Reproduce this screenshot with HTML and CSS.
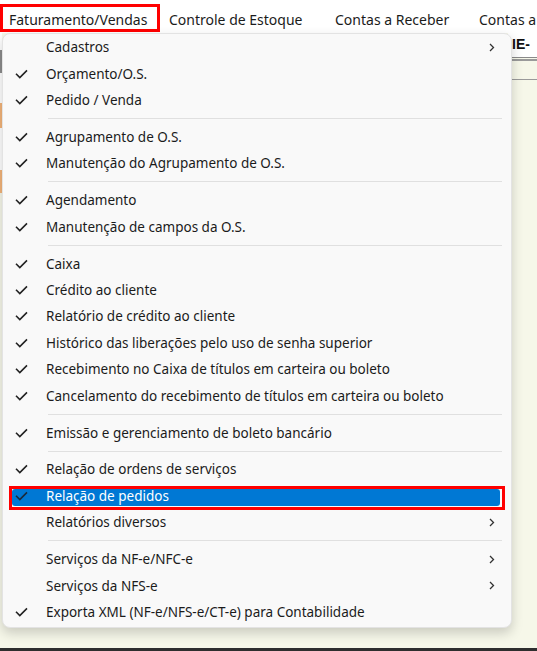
FILE: index.html
```html
<!DOCTYPE html>
<html lang="pt-BR">
<head>
<meta charset="utf-8">
<title>Menu</title>
<link rel="stylesheet" href="styles.css">
</head>
<body>
<div class="menubar">
  <div class="mb-item mb-active"><span>Faturamento/Vendas</span></div>
  <div class="mb-item"><span>Controle de Estoque</span></div>
  <div class="mb-item"><span>Contas a Receber</span></div>
  <div class="mb-item"><span>Contas a</span></div>
</div>
<div class="workspace">
  <div class="leftstrip">
    <div class="seg seg-white" style="height:17px"></div>
    <div class="seg seg-gray" style="height:23px"></div>
    <div class="seg seg-white" style="height:30px"></div>
    <div class="seg seg-orange" style="height:25px"></div>
    <div class="seg seg-white" style="height:42px"></div>
    <div class="seg seg-orange" style="height:23px"></div>
  </div>
  <div class="backpanel">
    <div class="bp-head">IE-</div>
    <div class="bp-rule"></div>
    <div class="bp-gap"></div>
    <div class="bp-line"></div>
  </div>
  <div class="bottomline"></div>

  <div class="popup">
    <div class="item"><span class="chk"></span><span class="lbl">Cadastros</span><span class="arr"><svg width="6" height="9" viewBox="0 0 6 9"><path d="M1 1l3.5 3.5L1 8" fill="none" stroke="#333" stroke-width="1.3"/></svg></span></div>
    <div class="item"><span class="chk"><svg width="13" height="10" viewBox="0 0 13 10"><path d="M1 4.8l3.8 3.8L12 1.4" fill="none" stroke="#222" stroke-width="1.6"/></svg></span><span class="lbl">Orçamento/O.S.</span></div>
    <div class="item"><span class="chk"><svg width="13" height="10" viewBox="0 0 13 10"><path d="M1 4.8l3.8 3.8L12 1.4" fill="none" stroke="#222" stroke-width="1.6"/></svg></span><span class="lbl">Pedido / Venda</span></div>
    <div class="sep"></div>
    <div class="item"><span class="chk"><svg width="13" height="10" viewBox="0 0 13 10"><path d="M1 4.8l3.8 3.8L12 1.4" fill="none" stroke="#222" stroke-width="1.6"/></svg></span><span class="lbl">Agrupamento de O.S.</span></div>
    <div class="item"><span class="chk"><svg width="13" height="10" viewBox="0 0 13 10"><path d="M1 4.8l3.8 3.8L12 1.4" fill="none" stroke="#222" stroke-width="1.6"/></svg></span><span class="lbl">Manutenção do Agrupamento de O.S.</span></div>
    <div class="sep"></div>
    <div class="item"><span class="chk"><svg width="13" height="10" viewBox="0 0 13 10"><path d="M1 4.8l3.8 3.8L12 1.4" fill="none" stroke="#222" stroke-width="1.6"/></svg></span><span class="lbl">Agendamento</span></div>
    <div class="item"><span class="chk"><svg width="13" height="10" viewBox="0 0 13 10"><path d="M1 4.8l3.8 3.8L12 1.4" fill="none" stroke="#222" stroke-width="1.6"/></svg></span><span class="lbl">Manutenção de campos da O.S.</span></div>
    <div class="sep"></div>
    <div class="item"><span class="chk"><svg width="13" height="10" viewBox="0 0 13 10"><path d="M1 4.8l3.8 3.8L12 1.4" fill="none" stroke="#222" stroke-width="1.6"/></svg></span><span class="lbl">Caixa</span></div>
    <div class="item"><span class="chk"><svg width="13" height="10" viewBox="0 0 13 10"><path d="M1 4.8l3.8 3.8L12 1.4" fill="none" stroke="#222" stroke-width="1.6"/></svg></span><span class="lbl">Crédito ao cliente</span></div>
    <div class="item"><span class="chk"><svg width="13" height="10" viewBox="0 0 13 10"><path d="M1 4.8l3.8 3.8L12 1.4" fill="none" stroke="#222" stroke-width="1.6"/></svg></span><span class="lbl">Relatório de crédito ao cliente</span></div>
    <div class="item"><span class="chk"><svg width="13" height="10" viewBox="0 0 13 10"><path d="M1 4.8l3.8 3.8L12 1.4" fill="none" stroke="#222" stroke-width="1.6"/></svg></span><span class="lbl">Histórico das liberações pelo uso de senha superior</span></div>
    <div class="item"><span class="chk"><svg width="13" height="10" viewBox="0 0 13 10"><path d="M1 4.8l3.8 3.8L12 1.4" fill="none" stroke="#222" stroke-width="1.6"/></svg></span><span class="lbl">Recebimento no Caixa de títulos em carteira ou boleto</span></div>
    <div class="item"><span class="chk"><svg width="13" height="10" viewBox="0 0 13 10"><path d="M1 4.8l3.8 3.8L12 1.4" fill="none" stroke="#222" stroke-width="1.6"/></svg></span><span class="lbl">Cancelamento do recebimento de títulos em carteira ou boleto</span></div>
    <div class="sep"></div>
    <div class="item"><span class="chk"><svg width="13" height="10" viewBox="0 0 13 10"><path d="M1 4.8l3.8 3.8L12 1.4" fill="none" stroke="#222" stroke-width="1.6"/></svg></span><span class="lbl">Emissão e gerenciamento de boleto bancário</span></div>
    <div class="sep"></div>
    <div class="item"><span class="chk"><svg width="13" height="10" viewBox="0 0 13 10"><path d="M1 4.8l3.8 3.8L12 1.4" fill="none" stroke="#222" stroke-width="1.6"/></svg></span><span class="lbl">Relação de ordens de serviços</span></div>
    <div class="item item-sel"><span class="chk"><svg width="13" height="10" viewBox="0 0 13 10"><path d="M1 4.8l3.8 3.8L12 1.4" fill="none" stroke="#1b2a3a" stroke-width="1.6"/></svg></span><span class="lbl">Relação de pedidos</span></div>
    <div class="item"><span class="chk"></span><span class="lbl">Relatórios diversos</span><span class="arr"><svg width="6" height="9" viewBox="0 0 6 9"><path d="M1 1l3.5 3.5L1 8" fill="none" stroke="#333" stroke-width="1.3"/></svg></span></div>
    <div class="sep"></div>
    <div class="item"><span class="chk"></span><span class="lbl">Serviços da NF-e/NFC-e</span><span class="arr"><svg width="6" height="9" viewBox="0 0 6 9"><path d="M1 1l3.5 3.5L1 8" fill="none" stroke="#333" stroke-width="1.3"/></svg></span></div>
    <div class="item"><span class="chk"></span><span class="lbl">Serviços da NFS-e</span><span class="arr"><svg width="6" height="9" viewBox="0 0 6 9"><path d="M1 1l3.5 3.5L1 8" fill="none" stroke="#333" stroke-width="1.3"/></svg></span></div>
    <div class="item"><span class="chk"><svg width="13" height="10" viewBox="0 0 13 10"><path d="M1 4.8l3.8 3.8L12 1.4" fill="none" stroke="#222" stroke-width="1.6"/></svg></span><span class="lbl">Exporta XML (NF-e/NFS-e/CT-e) para Contabilidade</span></div>
  </div>
</div>
</body>
</html>
```

FILE: styles.css
```css
* { box-sizing: border-box; }
html, body {
  margin: 0;
  padding: 0;
  width: 537px;
  height: 651px;
  overflow: hidden;
}
body {
  background: #f6f7e9;
  font-family: "Noto Sans", "Open Sans", sans-serif;
  font-size: 14px;
  color: #1b1b1b;
}
.menubar {
  height: 33px;
  background: #ffffff;
  display: grid;
  grid-template-columns: 160px 166px 144px 1fr;
  align-items: center;
  white-space: nowrap;
  overflow: hidden;
}
.mb-item {
  padding-left: 9px;
  height: 28px;
  display: flex;
  align-items: center;
  padding-top: 2px;
  margin-top: 3px;
}
.mb-active {
  outline: 3px solid #ff0000;
  outline-offset: -3px;
}
.workspace {
  position: relative;
  height: 618px;
}
.leftstrip {
  width: 2px;
  display: flex;
  flex-direction: column;
}
.seg-white { background: #ffffff; }
.seg-gray { background: #8c8c8c; }
.seg-orange { background: #f3b47a; }
.backpanel {
  position: absolute;
  left: 508px;
  top: 0;
  width: 29px;
}
.bp-head {
  background: #ffffff;
  height: 24px;
  padding-left: 4px;
  padding-top: 3px;
  font-family: "Liberation Sans", sans-serif;
  font-weight: bold;
  font-size: 14px;
  white-space: nowrap;
  overflow: hidden;
  color: #111;
}
.bp-rule {
  height: 4px;
  border-top: 1px solid #8a8a8a;
  border-bottom: 2px solid #9a9a9a;
}
.bp-gap { height: 18px; }
.bp-line { height: 1px; background: #9a9a9a; }
.bottomline {
  position: absolute;
  left: 0;
  right: 0;
  bottom: 0;
  height: 3px;
  background: #2e2e2e;
}
.popup {
  position: absolute;
  left: 2px;
  top: 0;
  width: 510px;
  height: 595px;
  background: #f9f9f9;
  border: 1px solid #e3e3e3;
  border-radius: 8px;
  box-shadow: 0 5px 12px rgba(0, 0, 0, 0.18);
  padding: 0 0 3px;
  font-size: 13.5px;
}
.item {
  height: 26.4px;
  display: flex;
  align-items: center;
  white-space: nowrap;
  position: relative;
}
.chk {
  width: 43px;
  flex: none;
  display: flex;
  justify-content: flex-start;
  padding-left: 12px;
  align-items: center;
}
.chk svg { display: block; }
.lbl { flex: 1; }
.arr {
  width: 22px;
  flex: none;
  display: flex;
  align-items: center;
}
.arr svg { display: block; }
.sep {
  height: 10.57px;
  display: flex;
  align-items: center;
  padding-left: 45px;
  padding-right: 9px;
}
.sep::before {
  content: "";
  flex: 1;
  height: 1px;
  background: #e0e0e0;
}
.item-sel {
  color: #ffffff;
}
.item-sel::before {
  content: "";
  position: absolute;
  left: 6px;
  right: 6px;
  top: 3px;
  bottom: -1px;
  border: 3px solid #ff0000;
}
.item-sel::after {
  content: "";
  position: absolute;
  left: 9px;
  right: 11px;
  top: 6px;
  bottom: 3px;
  background: #0078d4;
  border-radius: 3px;
  z-index: 0;
}
.item-sel .chk, .item-sel .lbl { position: relative; z-index: 1; }
```
